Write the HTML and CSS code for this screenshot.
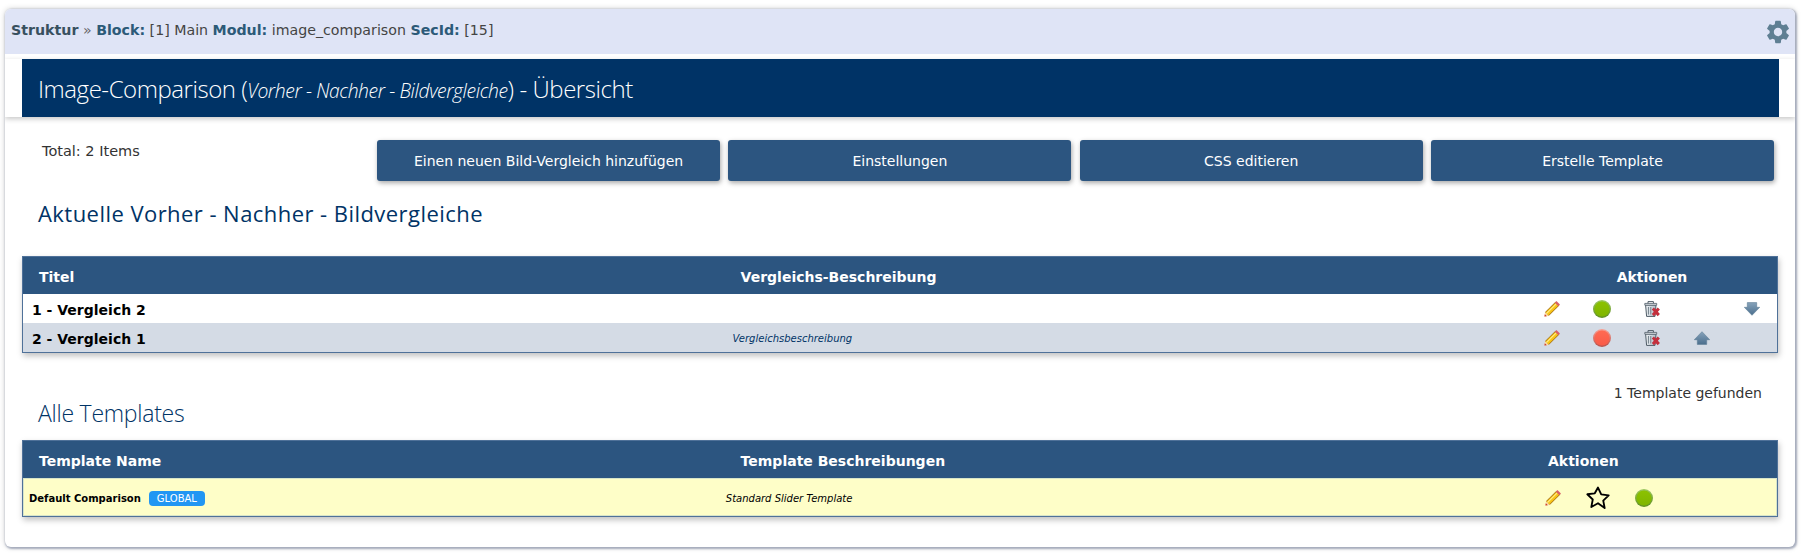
FILE: index.html
```html
<!DOCTYPE html>
<html lang="de">
<head>
<meta charset="utf-8">
<title>Image-Comparison</title>
<link rel="stylesheet" href="styles.css">
</head>
<body>
<svg class="defs" width="0" height="0" aria-hidden="true">
  <defs>
    <linearGradient id="gGreen" x1="0" y1="0" x2="0" y2="1">
      <stop offset="0" stop-color="#8cc200"/><stop offset="1" stop-color="#7fb500"/>
    </linearGradient>
    <linearGradient id="gGreenRim" x1="0" y1="0" x2="0" y2="1">
      <stop offset="0" stop-color="#9cc860"/><stop offset="1" stop-color="#5f8f20"/>
    </linearGradient>
    <linearGradient id="gRed" x1="0" y1="0" x2="0" y2="1">
      <stop offset="0" stop-color="#ff6a52"/><stop offset="1" stop-color="#f95b48"/>
    </linearGradient>
    <linearGradient id="gRedRim" x1="0" y1="0" x2="0" y2="1">
      <stop offset="0" stop-color="#fb9f92"/><stop offset="1" stop-color="#b9524a"/>
    </linearGradient>
    <linearGradient id="gArrow" x1="0" y1="0" x2="0" y2="1">
      <stop offset="0" stop-color="#86a2ba"/><stop offset="1" stop-color="#4b6f8e"/>
    </linearGradient>
    <linearGradient id="gCan" x1="0" y1="0" x2="1" y2="0">
      <stop offset="0" stop-color="#f4f6f8"/><stop offset="1" stop-color="#aebdc8"/>
    </linearGradient>
    <symbol id="pencil" viewBox="0 0 16 16">
      <path d="M2.8 13.2 13.4 2.6" stroke="#a8741a" stroke-width="5.4"/>
      <path d="M2.8 13.2 13.4 2.6" stroke="#f8c516" stroke-width="3.9"/>
      <path d="M2.4 12.6 12.2 2.8" stroke="#fdec8a" stroke-width="1.1"/>
      <path d="M12.6 3.4 14.2 1.8" stroke="#d8606a" stroke-width="5"/>
      <path d="M.4 15.6 1 11.2 4.8 15z" fill="#f6d9a8"/>
      <path d="M.4 15.6.8 13.2 2.8 15.2z" fill="#c8322a"/>
    </symbol>
    <symbol id="trash" viewBox="0 0 16 16">
      <path d="M1.6 4h10.4L11 15.4H2.6z" fill="url(#gCan)" stroke="#4f5c67"/>
      <path d="M.8 2.4h11.9V4.2H.8z" fill="#e3e8ec" stroke="#4f5c67" stroke-width=".8"/>
      <path d="M4 2.2V.6h5.4v1.6" fill="none" stroke="#4f5c67"/>
      <path d="M4.4 6v7.6M6.8 6v7.6" stroke="#6f7d88"/>
      <path d="M7.8 8.6 9.9 6.6 11.8 8.4 13.7 6.6 15.9 8.6 13.9 10.8 15.9 13 13.7 15.2 11.8 13.2 9.9 15.2 7.8 13 9.8 10.8z" fill="#c42f3c"/>
    </symbol>
    <symbol id="down" viewBox="0 0 16 14">
      <path d="M3.3.6h9.4v4.7H15.7L8 13.3.3 5.3H3.3z" fill="url(#gArrow)" stroke="#5e7d96" stroke-width=".6"/>
    </symbol>
    <symbol id="up" viewBox="0 0 16 14">
      <path d="M3.3 13.4h9.4V8.7H15.7L8 .7.3 8.7H3.3z" fill="url(#gArrow)" stroke="#5e7d96" stroke-width=".6"/>
    </symbol>
    <symbol id="star" viewBox="1 1 22 22">
      <path d="M12 2.4l2.95 6.3 6.85.9-5 4.75 1.3 6.85L12 16.85 5.9 20.2l1.3-6.85-5-4.75 6.85-.9z" fill="none" stroke="#000" stroke-width="1.7" stroke-linejoin="round"/>
    </symbol>
    <symbol id="gear" viewBox="0 0 24 24">
      <path fill-rule="evenodd" d="M19.14 12.94c.04-.3.06-.61.06-.94 0-.32-.02-.64-.07-.94l2.03-1.58a.49.49 0 0 0 .12-.61l-1.92-3.32a.488.488 0 0 0-.59-.22l-2.39.96c-.5-.38-1.03-.7-1.62-.94l-.36-2.54a.484.484 0 0 0-.48-.41h-3.84c-.24 0-.43.17-.47.41l-.36 2.54c-.59.24-1.13.57-1.62.94l-2.39-.96c-.22-.08-.47 0-.59.22L2.74 8.87c-.12.21-.08.47.12.61l2.03 1.58c-.05.3-.09.63-.09.94s.02.64.07.94l-2.03 1.58a.49.49 0 0 0-.12.61l1.92 3.32c.12.22.37.29.59.22l2.39-.96c.5.38 1.03.7 1.62.94l.36 2.54c.05.24.24.41.48.41h3.84c.24 0 .44-.17.47-.41l.36-2.54c.59-.24 1.13-.56 1.62-.94l2.39.96c.22.08.47 0 .59-.22l1.92-3.32c.12-.22.07-.47-.12-.61l-2.01-1.58zM12 15.6c-1.98 0-3.6-1.62-3.6-3.6s1.62-3.6 3.6-3.6 3.6 1.62 3.6 3.6-1.62 3.6-3.6 3.6z"/>
    </symbol>
    <symbol id="green" viewBox="0 0 18 18">
      <circle cx="9" cy="9" r="9" fill="url(#gGreenRim)"/>
      <circle cx="9" cy="9" r="7.6" fill="url(#gGreen)"/>
    </symbol>
    <symbol id="red" viewBox="0 0 18 18">
      <circle cx="9" cy="9" r="9" fill="url(#gRedRim)"/>
      <circle cx="9" cy="9" r="7.6" fill="url(#gRed)"/>
    </symbol>
  </defs>
</svg>

<main class="panel">
  <div class="crumbs">
    <p class="crumb-text"><b class="crumb-root">Struktur</b> <span class="crumb-sep">»</span> <b>Block:</b> [1] Main <b>Modul:</b> image_comparison <b>SecId:</b> [15]</p>
    <svg class="gear"><use href="#gear"/></svg>
  </div>
  <div class="title-band">
    <h1 class="title">Image-Comparison (<em>Vorher - Nachher - Bildvergleiche</em>) - Übersicht</h1>
  </div>
  <div class="toolbar">
    <div class="total">Total: 2 Items</div>
    <div class="buttons">
      <a class="btn">Einen neuen Bild-Vergleich hinzufügen</a>
      <a class="btn">Einstellungen</a>
      <a class="btn">CSS editieren</a>
      <a class="btn">Erstelle Template</a>
    </div>
  </div>
  <h2 class="section-title first">Aktuelle Vorher - Nachher - Bildvergleiche</h2>
  <section class="table">
    <div class="row head">
      <div class="th">Titel</div>
      <div class="th">Vergleichs-Beschreibung</div>
      <div class="th center">Aktionen</div>
    </div>
    <div class="row item">
      <div class="name">1 - Vergleich 2</div>
      <div class="desc"></div>
      <div class="actions">
        <span class="act"><svg class="ico"><use href="#pencil"/></svg></span>
        <span class="act"><svg class="dot"><use href="#green"/></svg></span>
        <span class="act"><svg class="ico"><use href="#trash"/></svg></span>
        <span class="act"></span>
        <span class="act"><svg class="arrow"><use href="#down"/></svg></span>
      </div>
    </div>
    <div class="row item alt">
      <div class="name">2 - Vergleich 1</div>
      <div class="desc">Vergleichsbeschreibung</div>
      <div class="actions">
        <span class="act"><svg class="ico"><use href="#pencil"/></svg></span>
        <span class="act"><svg class="dot"><use href="#red"/></svg></span>
        <span class="act"><svg class="ico"><use href="#trash"/></svg></span>
        <span class="act"><svg class="arrow"><use href="#up"/></svg></span>
        <span class="act"></span>
      </div>
    </div>
  </section>
  <div class="templates-head">
    <h2 class="section-title">Alle Templates</h2>
    <div class="found">1 Template gefunden</div>
  </div>
  <section class="table">
    <div class="row head">
      <div class="th">Template Name</div>
      <div class="th">Template Beschreibungen</div>
      <div class="th shifted">Aktionen</div>
    </div>
    <div class="row tpl">
      <div class="tpl-name"><b>Default Comparison</b><span class="badge">GLOBAL</span></div>
      <div class="tpl-desc">Standard Slider Template</div>
      <div class="tpl-actions">
        <svg class="ico"><use href="#pencil"/></svg>
        <svg class="star"><use href="#star"/></svg>
        <svg class="dot"><use href="#green"/></svg>
      </div>
    </div>
  </section>
</main>
</body>
</html>
```
FILE: styles.css
```css
* { box-sizing: border-box; }
html, body { margin: 0; padding: 0; background: #fff; }
body {
  padding: 9px 14px 12px 5px;
  font-family: "DejaVu Sans", Verdana, sans-serif;
  font-size: 14px;
  color: #333;
  overflow: hidden;
}
.defs { position: absolute; }

.panel {
  height: 538px;
  background: #fff;
  border-radius: 6px;
  box-shadow: 1px 1px 2px 1px rgba(110, 120, 150, .55), 0 0 6px rgba(0, 0, 0, .18);
  overflow: hidden;
}

.crumbs {
  height: 45px;
  background: #dfe4f6;
  display: flex;
  align-items: center;
  justify-content: space-between;
  padding: 0 3px 3px 6px;
}
.crumb-text { margin: 0; color: #444; font-size: 14.2px; }
.crumb-text b { color: #2c5a78; }
.crumb-text .crumb-root { color: #38505f; }
.crumb-sep { color: #666; }
.gear { width: 28px; height: 28px; fill: #5f7f93; margin-top: 3px; }

.title-band {
  margin-top: 5px;
  height: 58px;
  padding: 0 16px 0 17px;
  box-shadow: 0 2px 5px rgba(0, 0, 0, .22);
}
.title {
  margin: 0;
  height: 58px;
  line-height: 60px;
  padding-left: 16px;
  background: #003366;
  color: #fff;
  font-family: "Open Sans", sans-serif;
  font-weight: 300;
  font-size: 24px;
  letter-spacing: -.45px;
  white-space: nowrap;
}
.title em { font-size: 19.3px; letter-spacing: -.4px; }

.toolbar {
  display: flex;
  justify-content: space-between;
  margin-top: 23px;
  padding: 0 21px 0 37px;
}
.total { padding-top: 3px; font-size: 14.5px; }
.buttons { display: flex; gap: 8.3px; }
.btn {
  width: 343px;
  height: 41px;
  display: flex;
  align-items: center;
  justify-content: center;
  background: #2c5580;
  color: #fff;
  border-radius: 3px;
  box-shadow: 1px 2px 5px rgba(0, 0, 0, .35);
}

.section-title {
  margin: 0;
  color: #003366;
  font-family: "Open Sans", sans-serif;
  font-weight: 300;
  font-size: 23px;
  line-height: 32px;
  padding-left: 33px;
  letter-spacing: -.25px;
}
.section-title.first {
  margin-top: 16px;
  margin-bottom: 27px;
  font-weight: 400;
  font-size: 22px;
  letter-spacing: .45px;
}

.table {
  margin: 0 17px;
  border: 1px solid #4f7199;
  box-shadow: 1px 3px 6px rgba(0, 0, 0, .25);
}
.row {
  display: grid;
  grid-template-columns: 40% 1fr 250px;
  align-items: center;
}
.head { height: 37px; background: #2c5580; }
.th {
  padding: 2px 0 0 16px;
  font-weight: 700;
  color: #fff;
  font-size: 14px;
}
.th.center { padding-left: 0; text-align: center; }
.th.shifted { padding-left: 21px; }

.item { height: 29px; background: #fff; }
.item.alt { background: #d4dbe5; height: 29px; }
.name { padding: 2px 0 0 9px; font-weight: 700; color: #000; font-size: 14px; }
.desc { padding: 2px 0 0 8px; font-style: italic; color: #003366; font-size: 10px; }

.actions { display: grid; grid-template-columns: repeat(5, 50px); align-items: center; }
.act { display: flex; justify-content: center; align-items: center; height: 29px; }
.ico { width: 16px; height: 16px; display: block; }
.dot { width: 18px; height: 18px; display: block; }
.arrow { width: 16px; height: 14px; display: block; }
.star { width: 24px; height: 24px; display: block; }

.templates-head {
  display: flex;
  justify-content: space-between;
  margin-top: 25px;
  padding-right: 33px;
  height: 62px;
}
.templates-head .section-title { padding-top: 18px; line-height: 34px; }
.found { padding-top: 7px; }

.tpl { height: 38px; background: #fefec8; border: 1px solid #d8e4c8; }
.tpl-name { display: flex; align-items: center; padding: 2px 0 0 5px; color: #000; font-size: 10px; }
.badge {
  margin-left: 8px;
  background: #2196f3;
  color: #fff;
  font-size: 10px;
  line-height: 15px;
  padding: 0 8px;
  border-radius: 4px;
}
.tpl-desc { padding: 2px 0 0 1px; font-style: italic; color: #000; font-size: 10px; }
.tpl-actions {
  display: flex;
  align-items: center;
  gap: 25px;
  padding: 2px 0 0 19px;
}
```
